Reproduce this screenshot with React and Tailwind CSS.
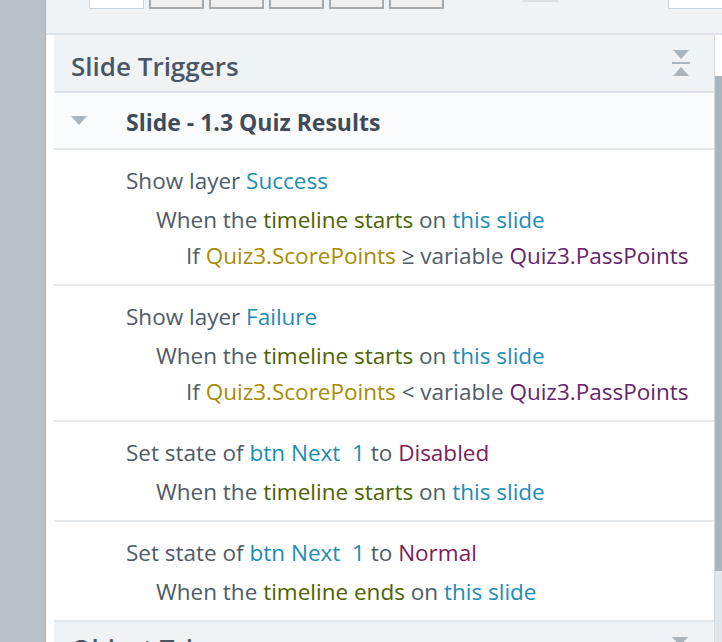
import React from "react";

const C = {
  text: "text-[#4e5b66]",
  obj: "text-[#1d8cb5]",
  evt: "text-[#4d6200]",
  slide: "text-[#1d8cb5]",
  varA: "text-[#a68b00]",
  varB: "text-[#63246d]",
  state: "text-[#7a1d5a]",
};

function CollapseIcon() {
  return (
    <svg width="18" height="26" viewBox="0 0 18 26" className="text-[#a9b4bc]">
      <path d="M1 0 H17 L9 9 Z" fill="currentColor" />
      <rect x="0" y="12" width="18" height="2" fill="currentColor" />
      <path d="M9 17 L17 26 H1 Z" fill="currentColor" />
    </svg>
  );
}

function Caret({ className = "" }) {
  return (
    <svg width="16" height="9" viewBox="0 0 16 9" className={`text-[#a9b4bc] ${className}`}>
      <path d="M0 0 H16 L8 9 Z" fill="currentColor" />
    </svg>
  );
}

function TriggerRow({ lines }) {
  return (
    <div className="border-b-2 border-[#e5e9ec] bg-white pt-[13px] pb-[10px]">
      {lines.map((line, i) => (
        <div
          key={i}
          className={`h-[36px] leading-[36px] whitespace-pre ${C.text} ${i === 0 ? "mb-[3px] pl-[72px]" : i === 1 ? "pl-[102px]" : "pl-[132px]"}`}
        >
          {line}
        </div>
      ))}
    </div>
  );
}

export default function App() {
  const rows = [
    [
      <>Show layer <span className={C.obj}>Success</span></>,
      <>When the <span className={C.evt}>timeline starts</span> on <span className={C.slide}>this slide</span></>,
      <>If <span className={C.varA}>Quiz3.ScorePoints</span> ≥ variable <span className={C.varB}>Quiz3.PassPoints</span></>,
    ],
    [
      <>Show layer <span className={C.obj}>Failure</span></>,
      <>When the <span className={C.evt}>timeline starts</span> on <span className={C.slide}>this slide</span></>,
      <>If <span className={C.varA}>Quiz3.ScorePoints</span> &lt; variable <span className={C.varB}>Quiz3.PassPoints</span></>,
    ],
    [
      <>Set state of <span className={C.obj}>btn Next  1</span> to <span className={C.state}>Disabled</span></>,
      <>When the <span className={C.evt}>timeline starts</span> on <span className={C.slide}>this slide</span></>,
    ],
    [
      <>Set state of <span className={C.obj}>btn Next  1</span> to <span className={C.state}>Normal</span></>,
      <>When the <span className={C.evt}>timeline ends</span> on <span className={C.slide}>this slide</span></>,
    ],
  ];

  return (
    <div
      className="flex h-[642px] w-[722px] overflow-hidden bg-[#b9c1c8] text-[22.5px]"
      style={{ fontFamily: '"Open Sans", "Noto Sans", sans-serif' }}
    >
      <div className="w-[46px] shrink-0 border-r border-[#aab3ba]" />
      <div className="flex min-w-0 flex-1 flex-col bg-[#eff3f6]">
        {/* toolbar, cut off at the top */}
        <div className="flex h-[35px] shrink-0 items-start border-b-2 border-[#dde3e8] pl-[43px]">
          <div className="h-[9px] w-[55px] border-x border-b border-[#c6d3dc] bg-white" />
          {[0, 1, 2, 3, 4].map((i) => (
            <div key={i} className="ml-[5px] h-[9px] w-[55px] border-x-2 border-b-2 border-[#a9a9a9] bg-[#efefef]" />
          ))}
          <div className="ml-[79px] h-[2px] w-[35px] bg-[#dde1e4]" />
          <div className="ml-auto h-[9px] w-[54px] border-l border-b border-[#c6d3dc] bg-white" />
        </div>

        <div className="flex min-h-0 flex-1">
          <div className="w-[8px] shrink-0 bg-white" />
          <div className="flex min-w-0 flex-1 flex-col">
            <div className="flex h-[58px] shrink-0 items-center justify-between border-b-2 border-[#dde3e8] bg-[#eff3f6] pl-[17px] pr-[24px]">
              <span className="pt-[6px] text-[26px] font-semibold text-[#4a5763]">Slide Triggers</span>
              <CollapseIcon />
            </div>
            <div className="flex h-[57px] shrink-0 items-center border-b-2 border-[#e5e9ec] bg-[#fafbfc] pl-[17px]">
              <Caret />
              <span className="ml-[39px] pt-[4px] text-[23px] font-bold text-[#3f4c57]">Slide - 1.3 Quiz Results</span>
            </div>
            {rows.map((r, i) => (
              <TriggerRow key={i} lines={r} />
            ))}
            <div className="flex h-[40px] shrink-0 items-start justify-between overflow-hidden bg-[#eff3f6] pl-[17px] pr-[26px]">
              <span className="mt-[8px] text-[26px] leading-[36px] font-semibold text-[#4a5763]">Object Triggers</span>
              <Caret className="mt-[15px]" />
            </div>
          </div>
          <div className="flex w-[8px] shrink-0 flex-col border-l border-[#d5dce1] bg-white">
            <div className="h-[41px] shrink-0 bg-white" />
            <div className="h-[495px] shrink-0 bg-[#a9b4bc]" />
            <div className="flex-1 bg-[#e1e6ea]" />
          </div>
        </div>
      </div>
    </div>
  );
}
